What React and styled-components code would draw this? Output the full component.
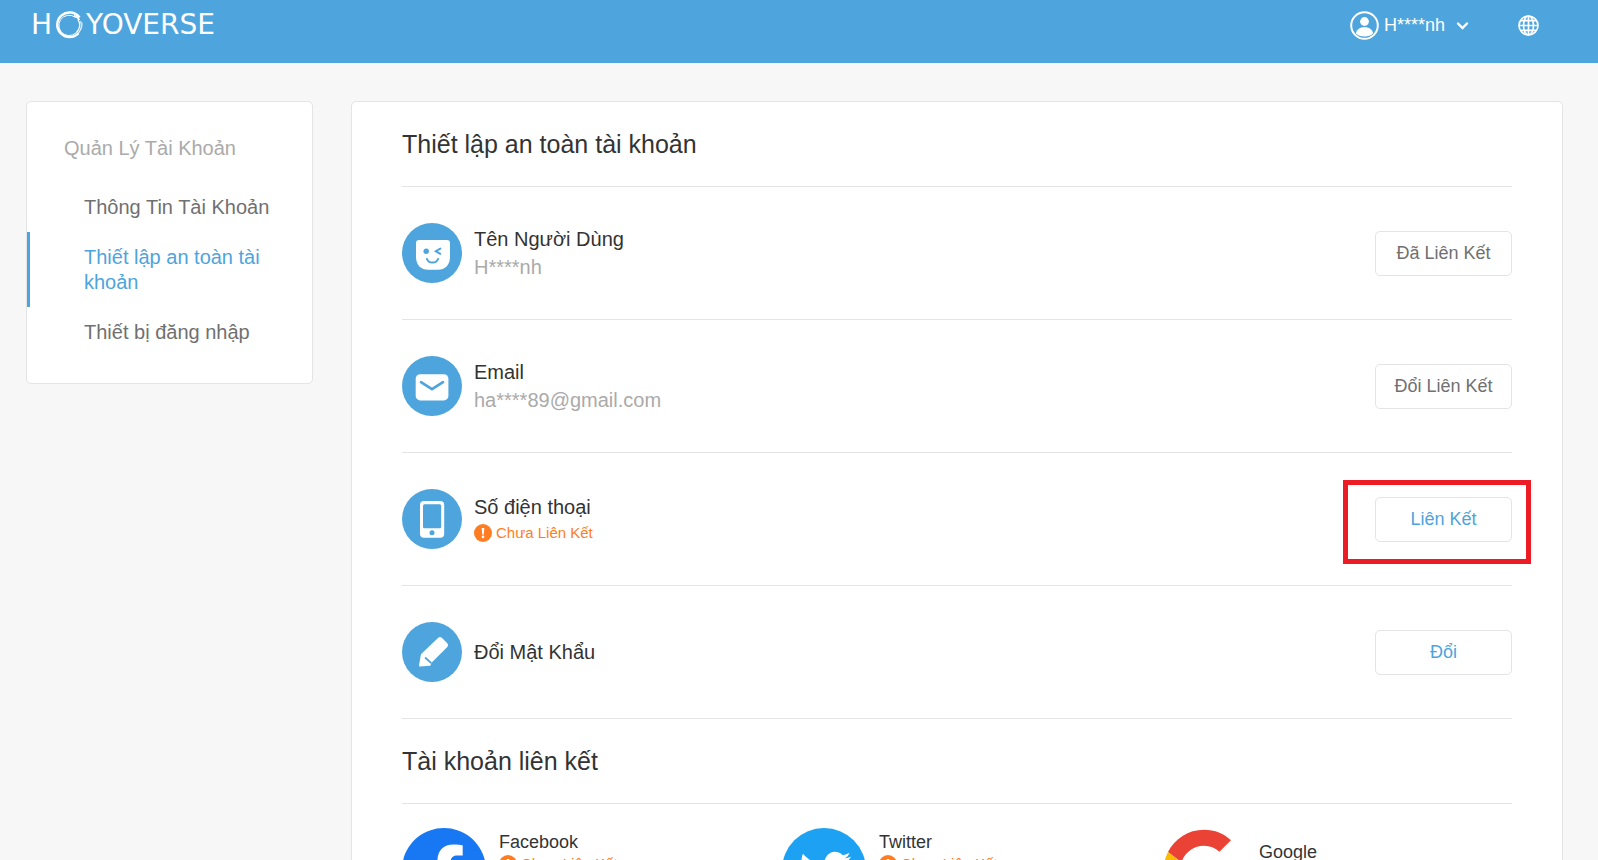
import React from "react";
import styled, { createGlobalStyle } from "styled-components";

const blue = "#4ea4dc";
const line = "#e4e4e4";
const orange = "#ff7d22";

const GlobalStyle = createGlobalStyle`
  * { box-sizing: border-box; }
  body {
    margin: 0;
    background: #f7f7f7;
    color: #333;
    font-family: "Liberation Sans", Arial, sans-serif;
    font-size: 20px;
  }
  h1, h2, h3, p, ul { margin: 0; padding: 0; font-weight: 400; }
  ul { list-style: none; }
  a { color: inherit; text-decoration: none; }
  button { font-family: inherit; cursor: pointer; }
  svg { display: block; flex: none; }
`;

const Page = styled.div`
  display: flex;
  flex-direction: column;
  height: 100vh;
`;

const Header = styled.header`
  flex: none;
  display: flex;
  align-items: center;
  justify-content: space-between;
  height: 63px;
  padding: 0 58px 13px 31px;
  background: ${blue};
  color: #fff;
`;

const Brand = styled.a`
  display: flex;
  align-items: center;
  gap: 2px;
  font-family: "DejaVu Sans", sans-serif;
  font-size: 28px;
  line-height: 28px;
`;

const HeaderActions = styled.div`
  display: flex;
  align-items: center;
  gap: 48px;
`;

const HeaderButton = styled.button`
  display: flex;
  align-items: center;
  padding: 0;
  border: 0;
  background: none;
  color: #fff;
  font-size: 18px;
  line-height: 28px;
`;

const UserName = styled.span`
  margin: 0 11px 0 5px;
`;

const Body = styled.div`
  flex: 1;
  min-height: 0;
  display: flex;
  align-items: flex-start;
  gap: 38px;
  padding: 38px 35px 38px 26px;
  overflow-y: auto;
  scrollbar-width: none;
`;

const Card = styled.div`
  border: 1px solid ${line};
  border-radius: 5px;
  background: #fff;
`;

const Sidebar = styled(Card).attrs({ as: "nav" })`
  flex: none;
  width: 287px;
  padding: 34px 0 26px;
`;

const SidebarTitle = styled.h2`
  padding: 0 37px 21px;
  color: #aaa;
  font-size: 20px;
  line-height: 25px;
`;

const SidebarLink = styled.a`
  display: block;
  padding: 13px 40px 12px 54px;
  border-left: 3px solid ${(p) => (p.$active ? blue : "transparent")};
  color: ${(p) => (p.$active ? blue : "#707070")};
  line-height: 25px;
`;

const Content = styled(Card).attrs({ as: "main" })`
  flex: 1;
  min-width: 0;
  padding: 0 50px 40px;
`;

const SectionTitle = styled.h1`
  padding: 28px 0;
  border-bottom: 1px solid ${line};
  font-size: 25px;
  line-height: 28px;
`;

const Row = styled.section`
  display: flex;
  align-items: center;
  gap: 12px;
  min-height: 133px;
  border-bottom: 1px solid ${line};
`;

const RowText = styled.div`
  flex: 1;
  min-width: 0;
  line-height: 28px;
`;

const RowTitle = styled.h2`
  font-size: 20px;
`;

const RowValue = styled.p`
  color: #aaa;
`;

const StatusLine = styled.p`
  display: flex;
  align-items: center;
  gap: 4px;
  color: ${orange};
  font-size: 15px;
  line-height: ${(p) => (p.$compact ? 20 : 24)}px;
`;

const ActionSlot = styled.div`
  position: relative;
`;

const ActionButton = styled.button`
  display: block;
  width: 137px;
  height: 45px;
  padding: 0;
  border: 1px solid ${line};
  border-radius: 5px;
  background: #fff;
  color: ${(p) => (p.$primary ? blue : "#707070")};
  font-size: 18px;
`;

const Highlight = styled.span`
  position: absolute;
  inset: -17px -19px -22px -32px;
  border: 5px solid #ed1c24;
  pointer-events: none;
`;

const Accounts = styled.ul`
  display: grid;
  grid-template-columns: repeat(3, 1fr);
  gap: 30px;
  padding-top: 24px;
`;

const Account = styled.li`
  display: flex;
  align-items: center;
  gap: 13px;
`;

const AccountText = styled.div`
  padding-bottom: 36px;
`;

const AccountName = styled.h3`
  font-size: 18px;
  line-height: 24px;
`;

const BrandRing = () => (
  <svg width="30" height="30" viewBox="0 0 30 30" fill="none" stroke="#fff" aria-hidden="true">
    <path d="M25.500 7.500A12.300 12.300 0 1 0 24.500 23.200" strokeWidth="2.400" />
    <path d="M21.500 7.500A10.200 10.200 0 1 0 24.400 19.500" strokeWidth="1" />
    <path d="M20 5.500q3.500 1.500 5.500 4.500" strokeWidth="1.600" />
    <path d="M24 9.500a10.700 10.700 0 0 1-1 12.500" strokeWidth="1.400" />
    <path d="M26.600 11a12.500 12.500 0 0 1-2.600 12.500" strokeWidth="1.200" opacity=".85" />
    <path d="M28.300 12.500a14 14 0 0 1-1.300 7" strokeWidth=".8" opacity=".7" />
  </svg>
);

const AvatarIcon = () => (
  <svg width="29" height="29" viewBox="0 0 29 29" aria-hidden="true">
    <circle cx="14.500" cy="14.500" r="13.300" fill="none" stroke="#fff" strokeWidth="2" />
    <circle cx="14.500" cy="10.500" r="4.400" fill="#fff" />
    <path d="M5.800 22.200C7 18 10 16.200 14.500 16.200s7.500 1.800 8.700 6c-2 2.400-5.200 3.300-8.700 3.300S7.800 24.600 5.800 22.200z" fill="#fff" />
  </svg>
);

const ChevronIcon = () => (
  <svg width="13" height="10" viewBox="0 0 13 10" fill="none" aria-hidden="true">
    <path d="M2 3.500l4.500 4.500L11 3.500" stroke="#fff" strokeWidth="2.400" strokeLinecap="round" />
  </svg>
);

const GlobeIcon = () => (
  <svg width="23" height="23" viewBox="0 0 23 23" fill="none" stroke="#fff" strokeWidth="1.700" aria-hidden="true">
    <circle cx="11.500" cy="11.500" r="9.500" />
    <ellipse cx="11.500" cy="11.500" rx="5" ry="9.500" />
    <path d="M11.500 2v19M2 11.500h19M3.500 6.700h16M3.500 16.300h16" />
  </svg>
);

const rowShapes = {
  face: (
    <>
      <path d="M17 17h28a3 3 0 0 1 3 3v14c0 8-5 12.800-12 12.800H26c-7 0-12-4.800-12-12.800V20a3 3 0 0 1 3-3z" fill="#fff" />
      <circle cx="24.200" cy="28.200" r="2.700" fill={blue} />
      <path d="M38.300 25.600l-4.500 2.600 4.500 2.600M25 36c1.600 4.700 9.400 4.700 11 0" fill="none" stroke={blue} strokeWidth="2" strokeLinecap="round" />
    </>
  ),
  mail: (
    <>
      <rect x="13.700" y="18.200" width="32.700" height="26.200" rx="4.500" fill="#fff" />
      <path d="M19 26.200l11 7 11-7" fill="none" stroke={blue} strokeWidth="2.600" strokeLinecap="round" />
    </>
  ),
  phone: (
    <>
      <rect x="18" y="12" width="24.200" height="36.700" rx="4" fill="#fff" />
      <rect x="21" y="15.300" width="18.200" height="24" rx="1.500" fill={blue} />
      <circle cx="30" cy="43.700" r="2.500" fill={blue} />
    </>
  ),
  pencil: (
    <>
      <path d="M17 43.200l1.700-9.700q.2-1.300 1.200-2.300L36 15.900q2-1.700 4 0l5.300 5.300q1.800 1.900 0 3.800L30 40.300l-1.500 2.900q-.4.500-1 .5L18 44.400q-1.200.1-1-1.200z" fill="#fff" />
      <path d="M23.600 36l5.400 4.800" stroke={blue} strokeWidth="1.800" strokeLinecap="round" />
    </>
  ),
};

const RowIcon = ({ kind }) => (
  <svg width="60" height="60" viewBox="0 0 60 60" aria-hidden="true">
    <circle cx="30" cy="30" r="30" fill={blue} />
    {rowShapes[kind]}
  </svg>
);

const WarningIcon = () => (
  <svg width="18" height="18" viewBox="0 0 18 18" aria-hidden="true">
    <circle cx="9" cy="9" r="9" fill={orange} />
    <path d="M7.700 4h2.600l-.5 6.500H8.200z" fill="#fff" />
    <circle cx="9" cy="12.900" r="1.300" fill="#fff" />
  </svg>
);

const FacebookLogo = () => (
  <svg width="84" height="84" viewBox="0 0 24 24" aria-hidden="true">
    <path
      fill="#1877f2"
      d="M24 12c0-6.627-5.373-12-12-12S0 5.373 0 12c0 5.990 4.388 10.954 10.125 11.854v-8.385H7.078v-3.470h3.047V9.357c0-3.007 1.792-4.669 4.533-4.669 1.312 0 2.686.235 2.686.235v2.953H15.830c-1.491 0-1.956.925-1.956 1.874V12h3.328l-.532 3.470h-2.796v8.385C19.612 22.954 24 17.990 24 12z"
    />
  </svg>
);

const TwitterLogo = () => (
  <svg width="84" height="84" viewBox="0 0 84 84" aria-hidden="true">
    <circle cx="42" cy="42" r="42" fill="#1da1f2" />
    <path
      transform="translate(17.500 19) scale(2.150)"
      fill="#fff"
      d="M23.953 4.570a10 10 0 01-2.825.775 4.958 4.958 0 002.163-2.723c-.951.555-2.005.959-3.127 1.184a4.920 4.920 0 00-8.384 4.482C7.690 8.095 4.067 6.130 1.640 3.162a4.822 4.822 0 00-.666 2.475c0 1.710.870 3.213 2.188 4.096a4.904 4.904 0 01-2.228-.616v.060a4.923 4.923 0 003.946 4.827 4.996 4.996 0 01-2.212.085 4.936 4.936 0 004.604 3.417 9.867 9.867 0 01-6.102 2.105c-.390 0-.779-.023-1.170-.067a13.995 13.995 0 007.557 2.209c9.053 0 13.998-7.496 13.998-13.985 0-.210 0-.420-.015-.630A9.935 9.935 0 0024 4.590z"
    />
  </svg>
);

const GoogleLogo = () => (
  <svg width="84" height="84" viewBox="-1 -1 50 50" aria-hidden="true">
    <path fill="#ea4335" d="M24 9.500c3.540 0 6.710 1.220 9.210 3.600l6.850-6.850C35.900 2.380 30.470 0 24 0 14.620 0 6.510 5.380 2.560 13.220l7.980 6.190C12.430 13.720 17.740 9.500 24 9.500z" />
    <path fill="#4285f4" d="M46.980 24.550c0-1.570-.15-3.090-.38-4.550H24v9.020h12.940c-.58 2.960-2.260 5.480-4.780 7.180l7.730 6c4.510-4.180 7.090-10.360 7.090-17.650z" />
    <path fill="#fbbc05" d="M10.530 28.590c-.48-1.450-.76-2.990-.76-4.590s.27-3.140.76-4.590l-7.980-6.190C.92 16.460 0 20.120 0 24c0 3.880.92 7.540 2.560 10.780l7.970-6.190z" />
    <path fill="#34a853" d="M24 48c6.480 0 11.930-2.130 15.890-5.810l-7.730-6c-2.150 1.450-4.920 2.300-8.160 2.300-6.260 0-11.570-4.220-13.470-9.910l-7.980 6.190C6.510 42.620 14.620 48 24 48z" />
  </svg>
);

const Unlinked = ({ compact }) => (
  <StatusLine $compact={compact}>
    <WarningIcon />
    Chưa Liên Kết
  </StatusLine>
);

const menu = [
  { label: "Thông Tin Tài Khoản" },
  { label: "Thiết lập an toàn tài khoản", active: true },
  { label: "Thiết bị đăng nhập" },
];

const rows = [
  { icon: "face", title: "Tên Người Dùng", value: "H****nh", action: "Đã Liên Kết" },
  { icon: "mail", title: "Email", value: "ha****89@gmail.com", action: "Đổi Liên Kết" },
  { icon: "phone", title: "Số điện thoại", unlinked: true, action: "Liên Kết", primary: true, highlight: true },
  { icon: "pencil", title: "Đổi Mật Khẩu", action: "Đổi", primary: true },
];

const accounts = [
  { name: "Facebook", Logo: FacebookLogo, unlinked: true },
  { name: "Twitter", Logo: TwitterLogo, unlinked: true },
  { name: "Google", Logo: GoogleLogo },
];

export default function App() {
  return (
    <>
      <GlobalStyle />
      <Page>
        <Header>
          <Brand href="#" aria-label="HOYOVERSE">
            <span>H</span>
            <BrandRing />
            <span>YOVERSE</span>
          </Brand>
          <HeaderActions>
            <HeaderButton type="button">
              <AvatarIcon />
              <UserName>H****nh</UserName>
              <ChevronIcon />
            </HeaderButton>
            <HeaderButton type="button" aria-label="Ngôn ngữ">
              <GlobeIcon />
            </HeaderButton>
          </HeaderActions>
        </Header>
        <Body>
          <Sidebar>
            <SidebarTitle>Quản Lý Tài Khoản</SidebarTitle>
            <ul>
              {menu.map((m) => (
                <li key={m.label}>
                  <SidebarLink href="#" $active={m.active}>{m.label}</SidebarLink>
                </li>
              ))}
            </ul>
          </Sidebar>
          <Content>
            <SectionTitle>Thiết lập an toàn tài khoản</SectionTitle>
            {rows.map((r) => (
              <Row key={r.title}>
                <RowIcon kind={r.icon} />
                <RowText>
                  <RowTitle>{r.title}</RowTitle>
                  {r.value && <RowValue>{r.value}</RowValue>}
                  {r.unlinked && <Unlinked />}
                </RowText>
                <ActionSlot>
                  <ActionButton type="button" $primary={r.primary}>{r.action}</ActionButton>
                  {r.highlight && <Highlight />}
                </ActionSlot>
              </Row>
            ))}
            <SectionTitle as="h2">Tài khoản liên kết</SectionTitle>
            <Accounts>
              {accounts.map(({ name, Logo, unlinked }) => (
                <Account key={name}>
                  <Logo />
                  <AccountText>
                    <AccountName>{name}</AccountName>
                    {unlinked && <Unlinked compact />}
                  </AccountText>
                </Account>
              ))}
            </Accounts>
          </Content>
        </Body>
      </Page>
    </>
  );
}
